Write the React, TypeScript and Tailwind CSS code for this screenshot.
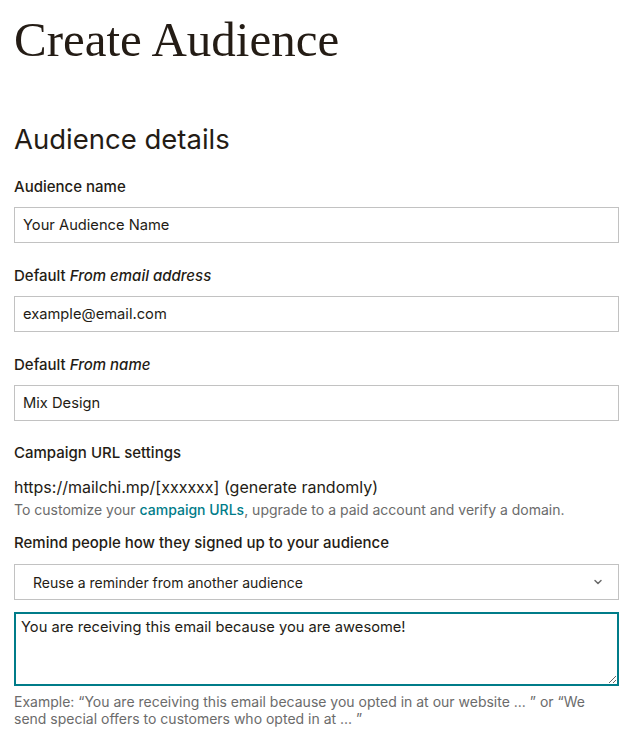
import { ChevronDown } from "lucide-react";

const sans = { fontFamily: "Inter, Roboto, 'Liberation Sans', sans-serif" };

const Field = ({ label, value }: { label: React.ReactNode; value: string }) => (
  <div className="mt-[23px]">
    <label className="block text-[15px] leading-[20px] font-medium text-[#241c15]">{label}</label>
    <div className="mt-[10px] h-[36px] border border-[#c2c2c2] bg-white flex items-center px-[8px] text-[14.7px] text-[#241c15]">
      {value}
    </div>
  </div>
);

export default function App() {
  return (
    <div className="bg-white min-h-[746px] pl-[14px] pr-[12px] text-[#241c15]" style={sans}>
      <h1
        className="pt-[12px] text-[49px] leading-[56px] font-normal text-[#241c15]"
        style={{ fontFamily: "'Liberation Serif', serif" }}
      >
        Create Audience
      </h1>

      <h2 className="mt-[54px] text-[27.5px] leading-[34px] font-normal">Audience details</h2>

      <div className="-mt-[2px]">
        <Field label="Audience name" value="Your Audience Name" />
        <Field
          label={
            <>
              Default <em className="italic">From email address</em>
            </>
          }
          value="example@email.com"
        />
        <Field
          label={
            <>
              Default <em className="italic">From name</em>
            </>
          }
          value="Mix Design"
        />
      </div>

      <div className="mt-[22px]">
        <p className="text-[15px] leading-[20px] font-medium">Campaign URL settings</p>
        <p className="mt-[13px] text-[16px] leading-[22px]">https://mailchi.mp/[xxxxxx] (generate randomly)</p>
        <p className="mt-[3px] text-[14px] leading-[18px] text-[#6b6b6b]">
          To customize your <a className="text-[#007c89] font-medium">campaign URLs</a>, upgrade to a paid account and
          verify a domain.
        </p>
      </div>

      <div className="mt-[14px]">
        <p className="text-[15px] leading-[20px] font-medium">Remind people how they signed up to your audience</p>
        <div className="mt-[11px] h-[36px] border border-[#c2c2c2] flex items-center justify-between pl-[18px] pr-[14px] text-[14px]">
          <span>Reuse a reminder from another audience</span>
          <ChevronDown size={12} strokeWidth={3} className="text-[#6b6b6b]" />
        </div>
        <textarea
          className="mt-[12px] block w-full h-[74px] border-2 border-[#007c89] outline-none px-[5px] pt-[3px] text-[14.7px] leading-[20px] text-[#241c15] resize-y"
          defaultValue="You are receiving this email because you are awesome!"
        />
        <p className="mt-[7px] text-[14px] leading-[17px] text-[#6b6b6b]">
          Example: “You are receiving this email because you opted in at our website ... ” or “We send special offers to
          customers who opted in at ... ”
        </p>
      </div>
    </div>
  );
}
